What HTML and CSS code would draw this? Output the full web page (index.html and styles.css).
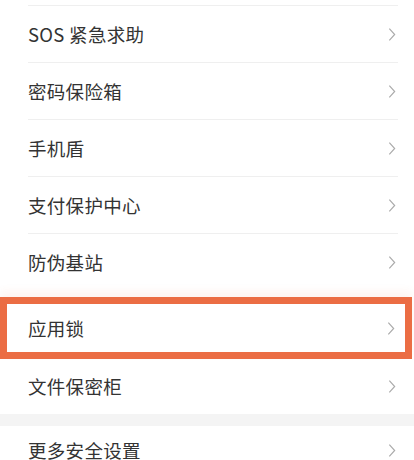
FILE: index.html
```html
<!DOCTYPE html>
<html lang="zh-CN">
<head>
    <meta charset="UTF-8">
    <meta name="viewport" content="width=device-width, initial-scale=1.0">
    <title>安全设置</title>
    <link rel="stylesheet" href="styles.css">
</head>
<body>
    <div class="list">
        <div class="row row-cut"></div>
        <div class="row">
            <span class="label">SOS 紧急求助</span>
            <svg class="chevron" viewBox="0 0 9 16"><path d="M1.5 1.5 L7.5 8 L1.5 14.5"/></svg>
        </div>
        <div class="row">
            <span class="label">密码保险箱</span>
            <svg class="chevron" viewBox="0 0 9 16"><path d="M1.5 1.5 L7.5 8 L1.5 14.5"/></svg>
        </div>
        <div class="row">
            <span class="label">手机盾</span>
            <svg class="chevron" viewBox="0 0 9 16"><path d="M1.5 1.5 L7.5 8 L1.5 14.5"/></svg>
        </div>
        <div class="row">
            <span class="label">支付保护中心</span>
            <svg class="chevron" viewBox="0 0 9 16"><path d="M1.5 1.5 L7.5 8 L1.5 14.5"/></svg>
        </div>
        <div class="row row-before-mark">
            <span class="label">防伪基站</span>
            <svg class="chevron" viewBox="0 0 9 16"><path d="M1.5 1.5 L7.5 8 L1.5 14.5"/></svg>
        </div>

        <!-- highlighted item -->
        <div class="row row-marked">
            <span class="label">应用锁</span>
            <svg class="chevron" viewBox="0 0 9 16"><path d="M1.5 1.5 L7.5 8 L1.5 14.5"/></svg>
        </div>

        <div class="row row-last">
            <span class="label">文件保密柜</span>
            <svg class="chevron" viewBox="0 0 9 16"><path d="M1.5 1.5 L7.5 8 L1.5 14.5"/></svg>
        </div>
    </div>

    <div class="gap"></div>

    <div class="list">
        <div class="row row-last row-more">
            <span class="label">更多安全设置</span>
            <svg class="chevron" viewBox="0 0 9 16"><path d="M1.5 1.5 L7.5 8 L1.5 14.5"/></svg>
        </div>
    </div>
</body>
</html>
```

FILE: styles.css
```css
html, body {
    margin: 0;
    padding: 0;
    height: 460px;
    overflow: hidden;
}

body {
    width: 414px;
    background: #ffffff;
    font-family: "Noto Sans CJK SC", "Noto Sans", sans-serif;
    color: #333333;
}

.list {
    background: #ffffff;
}

.row {
    display: flex;
    align-items: center;
    justify-content: space-between;
    height: 56px;
    margin: 0 16px 0 28px;
    border-bottom: 1px solid #efefef;
}

.row-cut {
    height: 5px;
}

.label {
    font-size: 18.5px;
    letter-spacing: 0.3px;
    line-height: 1;
}

.chevron {
    width: 8px;
    height: 15px;
    margin-right: 2px;
    fill: none;
    stroke: #aaaaaa;
    stroke-width: 1.3;
}

.row-before-mark {
    border-bottom: none;
    height: 57px;
}

.row-marked {
    box-sizing: border-box;
    height: 62px;
    margin: 6px 2px 0 0;
    padding: 0 8px 0 21px;
    border: 7px solid #eb6d44;
    box-shadow: 0 -6px 8px rgba(235, 109, 68, 0.07);
}

.row-last {
    border-bottom: none;
    height: 55px;
}

.gap {
    height: 12px;
    background: #f4f4f4;
}

.row-more {
    height: 48px;
}
```
